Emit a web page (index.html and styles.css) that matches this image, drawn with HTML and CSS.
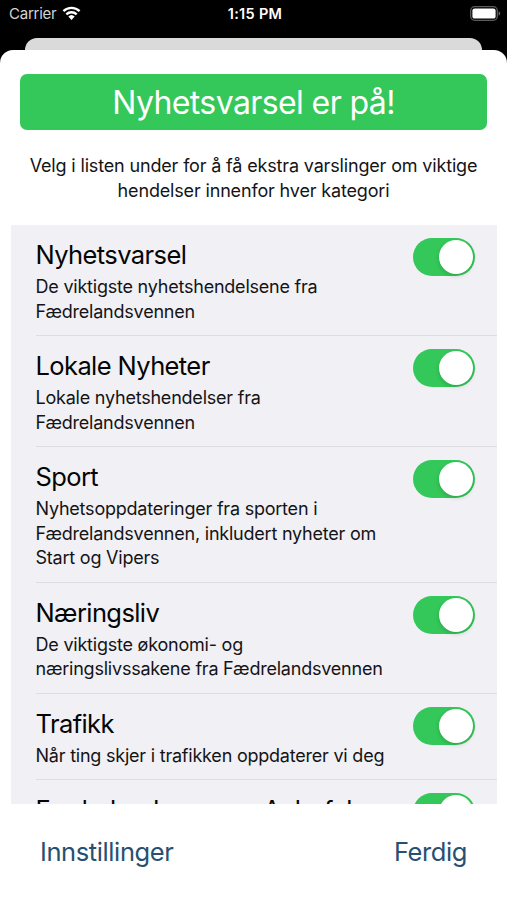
FILE: index.html
```html
<!DOCTYPE html>
<html lang="no">
<head>
  <meta charset="UTF-8" />
  <meta name="viewport" content="width=device-width, initial-scale=1.0" />
  <title>Nyhetsvarsel</title>
  <link rel="stylesheet" href="styles.css">
</head>
<body>
  <div class="statusbar">
    <div class="carrier">
      <span>Carrier</span>
      <svg class="wifi" viewBox="0 0 18 14" width="19" height="14.5">
        <path d="M1.2 4.9a11.3 11.3 0 0 1 15.6 0M4 8a7.2 7.2 0 0 1 10 0" fill="none" stroke="#fff" stroke-width="2.3" />
        <path d="M5.9 10.2a4.5 4.5 0 0 1 6.2 0L9 13.5z" fill="#fff" />
      </svg>
    </div>
    <div class="time">1:15 PM</div>
    <div class="battery">
      <svg viewBox="0 0 31 15" width="31" height="15">
        <rect x="0.7" y="0.7" width="26.6" height="13.6" rx="4" fill="none" stroke="#5c5c5c" stroke-width="1.3" />
        <rect x="2.4" y="2.4" width="23.2" height="10.2" rx="2.2" fill="#fff" />
        <path d="M28.6 5.3c2.2.8 2.2 3.6 0 4.4z" fill="#6a6a6a" />
      </svg>
    </div>
  </div>

  <div class="back-card"></div>

  <div class="sheet">
    <div class="banner">Nyhetsvarsel er på!</div>
    <p class="intro">Velg i listen under for å få ekstra varslinger om viktige<br>hendelser innenfor hver kategori</p>

    <div class="list">
      <div class="row">
        <div class="text">
          <h2>Nyhetsvarsel</h2>
          <p>De viktigste nyhetshendelsene fra<br>Fædrelandsvennen</p>
        </div>
        <div class="switch"></div>
      </div>
      <div class="row">
        <div class="text">
          <h2>Lokale Nyheter</h2>
          <p>Lokale nyhetshendelser fra<br>Fædrelandsvennen</p>
        </div>
        <div class="switch"></div>
      </div>
      <div class="row">
        <div class="text">
          <h2>Sport</h2>
          <p>Nyhetsoppdateringer fra sporten i<br>Fædrelandsvennen, inkludert nyheter om<br>Start og Vipers</p>
        </div>
        <div class="switch"></div>
      </div>
      <div class="row">
        <div class="text">
          <h2>Næringsliv</h2>
          <p>De viktigste økonomi- og<br>næringslivssakene fra Fædrelandsvennen</p>
        </div>
        <div class="switch"></div>
      </div>
      <div class="row">
        <div class="text">
          <h2>Trafikk</h2>
          <p>Når ting skjer i trafikken oppdaterer vi deg</p>
        </div>
        <div class="switch"></div>
      </div>
      <div class="row">
        <div class="text">
          <h2>Fædrelandsvennen Anbefaler</h2>
        </div>
        <div class="switch"></div>
      </div>
    </div>

    <div class="footer">
      <a class="link">Innstillinger</a>
      <a class="link">Ferdig</a>
    </div>
  </div>
</body>
</html>
```

FILE: styles.css
```css
* { box-sizing: border-box; margin: 0; padding: 0; }
body {
  width: 507px; height: 900px; overflow: hidden;
  display: flex; flex-direction: column;
  background: #000; color: #141416;
  font-family: Inter, "Liberation Sans", sans-serif;
}
.statusbar {
  display: grid; grid-template-columns: 1fr auto 1fr; align-items: center;
  height: 27px; padding: 0 6px 0 9px; flex: none;
  font-size: 15px; color: #fff;
}
.carrier { display: flex; align-items: center; gap: 6px; color: #d4d4d4; letter-spacing: -0.25px; }
.time { font-size: 14.5px; font-weight: 600; letter-spacing: 0.3px; }
.battery { display: flex; justify-content: flex-end; }
.back-card {
  height: 12px; margin: 11px 25px 0; flex: none;
  background: #dadada; border-radius: 12px 12px 0 0;
}
.sheet {
  flex: 1; min-height: 0; display: flex; flex-direction: column;
  background: #fff; border-radius: 13px 13px 0 0;
}
.banner {
  height: 56px; margin: 24px 20px 0; flex: none;
  background: #34c759; color: #fff; border-radius: 7px;
  font-size: 32px; line-height: 57px; text-align: center; letter-spacing: -0.6px;
}
.intro {
  margin-top: 24px; flex: none;
  font-size: 18px; line-height: 24.5px; text-align: center; letter-spacing: -0.16px;
}
.list {
  height: 579px; margin: 22px 10px 0 11px; padding-left: 24.5px; flex: none;
  background: #f1f0f5; overflow: hidden;
}
.row {
  display: flex; justify-content: space-between; align-items: flex-start;
  padding: 13px 22px 11px 0; border-bottom: 1px solid #dedde2;
}
.text { flex: 1; white-space: nowrap; }
h2 {
  font-size: 25.5px; font-weight: 400; line-height: 34px; letter-spacing: -0.6px;
  color: #050505; margin-bottom: 3px;
}
.row p { font-size: 18px; line-height: 24.5px; letter-spacing: -0.22px; }
.switch {
  width: 62px; height: 38px; padding: 2px; flex: none;
  display: flex; justify-content: flex-end;
  background: #34c759; border-radius: 19px;
}
.switch::after {
  content: ""; width: 34px; height: 34px; border-radius: 50%;
  background: #fff; box-shadow: 0 2px 4px rgba(0, 0, 0, 0.15);
}
.footer {
  display: flex; justify-content: space-between;
  padding: 31px 40px 0; font-size: 25.5px; line-height: 34px; letter-spacing: -0.4px;
}
.link { color: #275070; }
```
